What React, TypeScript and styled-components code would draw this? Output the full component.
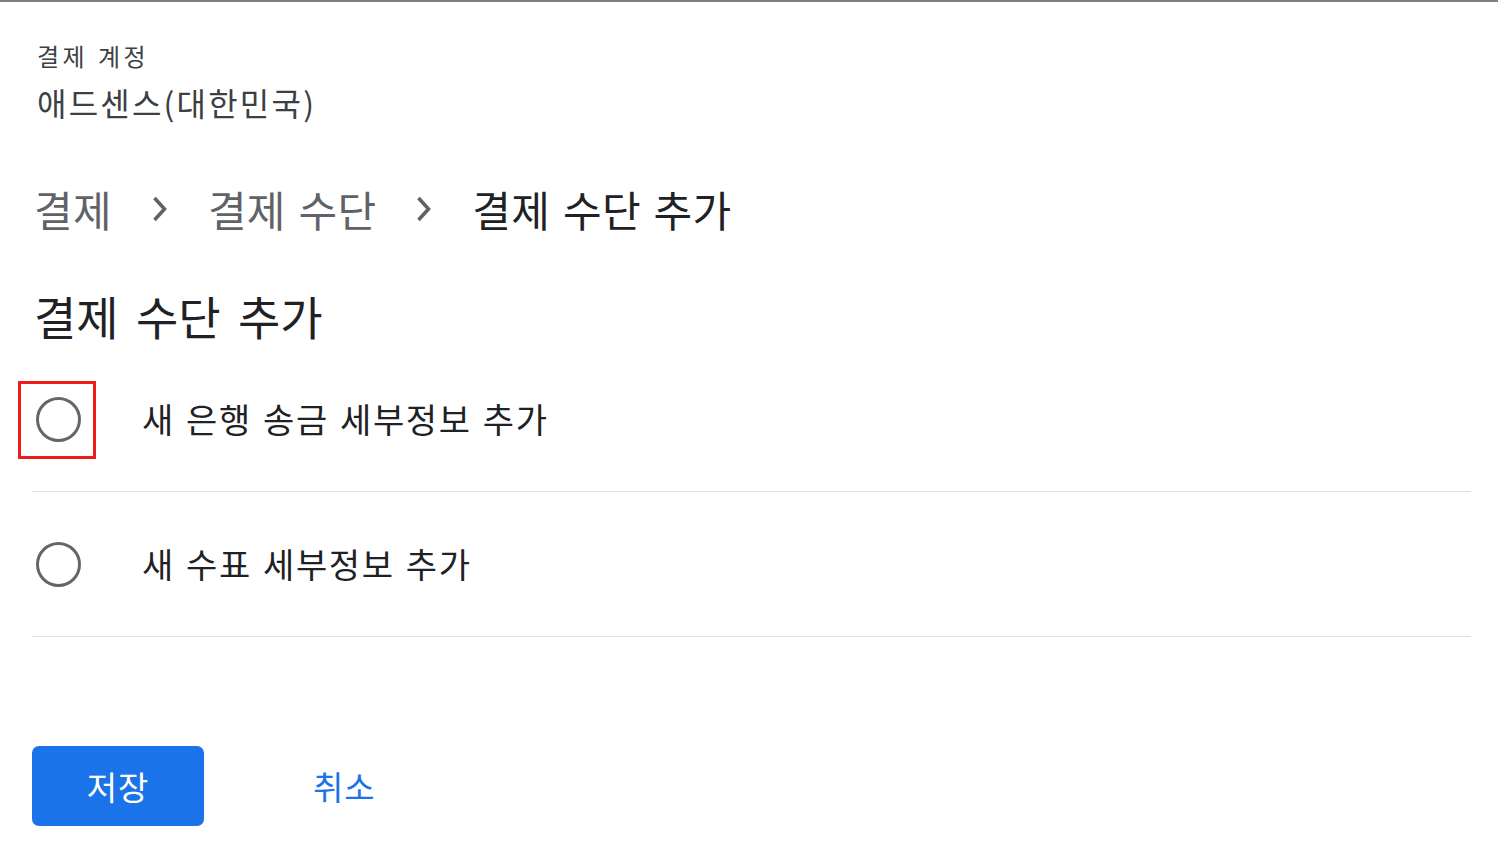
import React from "react";
import styled, { createGlobalStyle } from "styled-components";

const Global = createGlobalStyle`
  html, body { margin: 0; padding: 0; background: #fff; }
  body { font-family: "Noto Sans CJK KR", "Noto Sans", sans-serif; }
`;

const Page = styled.div`
  border-top: 2px solid #808080;
  padding: 0 27px 0 32px;
  width: 1498px;
  height: 858px;
  box-sizing: border-box;
  display: flex;
  flex-direction: column;
`;

const Account = styled.div`
  padding: 36px 0 0 5px;
  display: flex;
  flex-direction: column;
`;

const AccountLabel = styled.div`
  font-size: 24px;
  line-height: 36px;
  color: #3c4043;
  letter-spacing: 3.5px;
  word-spacing: 1px;
`;

const AccountName = styled.div`
  margin-top: 4px;
  font-size: 32px;
  line-height: 48px;
  color: #3c4043;
  letter-spacing: 2.2px;
`;

const Crumbs = styled.nav`
  display: flex;
  align-items: center;
  margin-top: 52px;
  padding-left: 2px;
  height: 62px;
`;

const Crumb = styled.span<{ $current?: boolean }>`
  font-size: 42px;
  line-height: 62px;
  color: ${(p) => (p.$current ? "#202124" : "#5f6368")};
  white-space: pre;
  word-spacing: 3px;
  letter-spacing: 0.3px;
`;

const Sep = styled.span`
  display: inline-flex;
  width: 96px;
  justify-content: center;
  align-items: center;
`;

const Heading = styled.h1`
  margin: 42px 0 0 2px;
  font-weight: 400;
  font-size: 46px;
  line-height: 66px;
  color: #202124;
  word-spacing: 7px;
`;

const Options = styled.div`
  margin-top: 32px;
  display: flex;
  flex-direction: column;
`;

const Row = styled.label<{ $first?: boolean }>`
  display: flex;
  align-items: ${(p) => (p.$first ? "flex-start" : "center")};
  height: ${(p) => (p.$first ? "99px" : "144px")};
  padding-top: ${(p) => (p.$first ? "12px" : "0")};
  border-bottom: 1px solid #e0e0e0;
  cursor: pointer;
`;

const RadioWrap = styled.span<{ $focused?: boolean }>`
  position: relative;
  display: inline-flex;
  width: 54px;
  height: 54px;
  margin-left: -1px;
  align-items: center;
  justify-content: center;
  flex-shrink: 0;
  &::after {
    content: "";
    display: ${(p) => (p.$focused ? "block" : "none")};
    position: absolute;
    left: -13px;
    top: -11px;
    width: 72px;
    height: 72px;
    border: 3px solid #ee1c1c;
  }
`;

const Circle = styled.span`
  border: 3px solid #666;
  border-radius: 50%;
  box-sizing: border-box;
  width: 45px;
  height: 45px;
`;

const OptionText = styled.span`
  margin-left: 57px;
  font-size: 34px;
  line-height: 54px;
  color: #202124;
  letter-spacing: 1.6px;
  word-spacing: 2px;
`;

const Actions = styled.div`
  margin-top: 109px;
  display: flex;
  align-items: center;
`;

const SaveButton = styled.button`
  width: 172px;
  height: 80px;
  border: none;
  border-radius: 7px;
  background: #1a73e8;
  color: #fff;
  font-family: inherit;
  font-size: 33px;
  padding: 0;
  cursor: pointer;
  letter-spacing: 1px;
`;

const CancelButton = styled.button`
  margin-left: 109px;
  border: none;
  background: none;
  color: #1a73e8;
  font-family: inherit;
  font-size: 33px;
  letter-spacing: 1px;
  padding: 0;
  cursor: pointer;
`;

const Chevron = () => (
  <svg width="16" height="26" viewBox="0 0 16 26">
    <path d="M2.5 2 L12.5 13 L2.5 24" fill="none" stroke="#5f6368" strokeWidth="3.6" />
  </svg>
);

export default function App() {
  return (
    <>
      <Global />
      <Page>
        <Account>
          <AccountLabel>결제 계정</AccountLabel>
          <AccountName>애드센스(대한민국)</AccountName>
        </Account>
        <Crumbs>
          <Crumb>결제</Crumb>
          <Sep><Chevron /></Sep>
          <Crumb>결제 수단</Crumb>
          <Sep><Chevron /></Sep>
          <Crumb $current>결제 수단 추가</Crumb>
        </Crumbs>
        <Heading>결제 수단 추가</Heading>
        <Options>
          <Row $first>
            <RadioWrap $focused><Circle /></RadioWrap>
            <OptionText>새 은행 송금 세부정보 추가</OptionText>
          </Row>
          <Row>
            <RadioWrap><Circle /></RadioWrap>
            <OptionText>새 수표 세부정보 추가</OptionText>
          </Row>
        </Options>
        <Actions>
          <SaveButton>저장</SaveButton>
          <CancelButton>취소</CancelButton>
        </Actions>
      </Page>
    </>
  );
}
